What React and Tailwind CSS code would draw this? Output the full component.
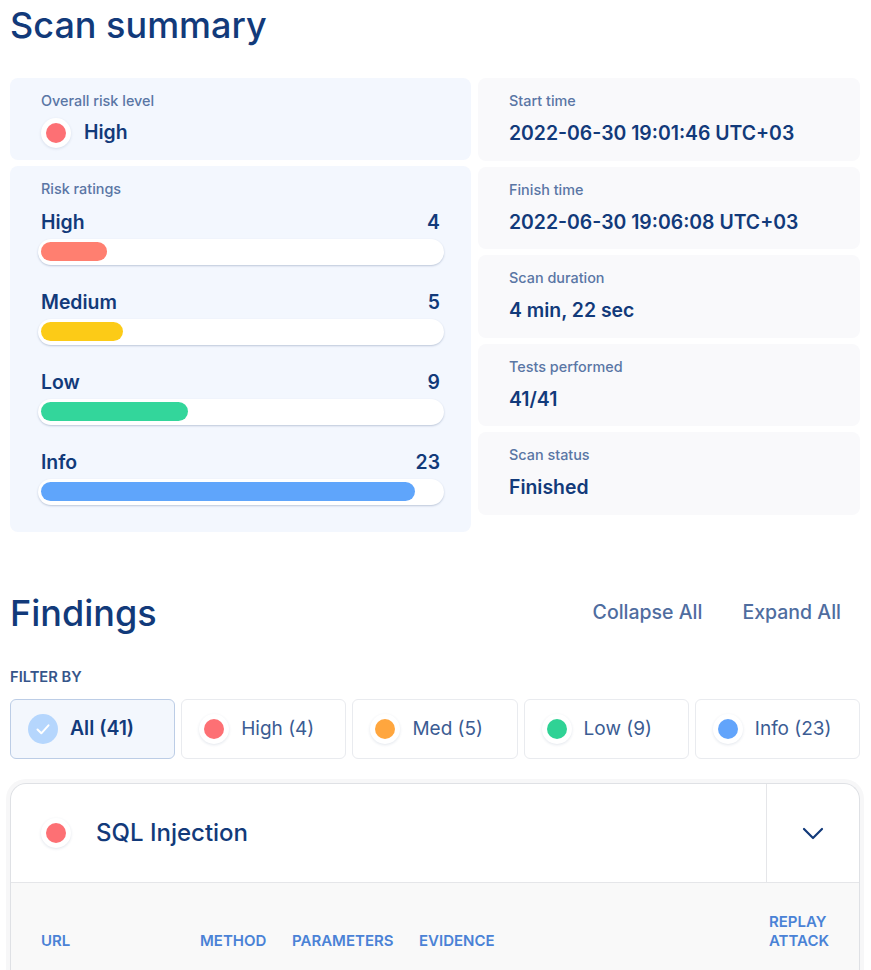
const navy = "text-[#123a7a]";
function Dot({ color, size = "w-[30px] h-[30px]" }) {
  return (
    <span className={`${size} shrink-0 rounded-full bg-white shadow-[0_1px_3px_rgba(30,60,110,0.13)] flex items-center justify-center`}>
      <span className={`w-5 h-5 rounded-full ${color}`} />
    </span>
  );
}
function Info({ label, value }) {
  return (
    <div className="h-[82.5px] bg-[#f9f9fb] rounded-lg pl-[31px] pt-[14px]">
      <div className="text-[14.4px] leading-[18px] font-medium text-[#5a76a5]">{label}</div>
      <div className={`mt-[10px] text-[19.4px] leading-[26px] font-semibold ${navy}`}>{value}</div>
    </div>
  );
}
function Rating({ name, n, bar, width }) {
  return (
    <div className="h-[80px]">
      <div className={`flex justify-between text-[19.4px] leading-[26px] font-semibold ${navy}`}>
        <span>{name}</span><span>{n}</span>
      </div>
      <div className="mt-[4px] -ml-[3px] w-[406px] h-[26px] rounded-full bg-white shadow-[0_1px_2px_rgba(30,60,110,0.25)] p-[3px] pr-0">
        <div className={`h-[19px] rounded-full ${bar} ${width}`} />
      </div>
    </div>
  );
}
function Filter({ label, color, active }) {
  return (
    <div className={`flex-1 h-[60px] rounded-md border flex items-center pl-[17px] gap-[12px] ${active ? "bg-[#f3f7fd] border-[#bccde6]" : "bg-white border-[#e9ebef]"}`}>
      {active ? (
        <span className="w-[30px] h-[30px] rounded-full bg-[#b5d6fd] flex items-center justify-center">
          <svg width="18" height="18" viewBox="0 0 18 18" fill="none" stroke="white" strokeWidth="2" strokeLinecap="round" strokeLinejoin="round"><path d="M3.5 9.5l3.8 3.8 7.2-8" /></svg>
        </span>
      ) : <Dot color={color} />}
      <span className={`${active ? `text-[19.4px] font-semibold ${navy}` : "text-[19px] text-[#3b5c93]"}`}>{label}</span>
    </div>
  );
}
export default function App() {
  return (
    <div className="h-[970px] overflow-hidden bg-white pl-[10px] pr-[11px] font-['Inter',sans-serif]">
      <h1 className={`text-[36px] leading-[50px] font-medium ${navy}`}>Scan summary</h1>
      <div className="mt-[28px] flex gap-[7px] items-start">
        <div className="w-[461px] flex flex-col gap-[6px]">
          <div className="h-[82px] bg-[#f3f7fe] rounded-lg pl-[31px] pt-[14px]">
            <div className="text-[14.4px] leading-[18px] font-medium text-[#5a76a5]">Overall risk level</div>
            <div className="mt-[8px] flex items-center gap-[13px]">
              <Dot color="bg-[#fd7074]" />
              <span className={`text-[19.4px] font-semibold ${navy}`}>High</span>
            </div>
          </div>
          <div className="h-[366px] bg-[#f3f7fe] rounded-lg pl-[31px] pr-[31px] pt-[14px]">
            <div className="text-[14.4px] leading-[18px] font-medium text-[#5a76a5]">Risk ratings</div>
            <div className="mt-[11px]">
              <Rating name="High" n="4" bar="bg-[#ff7f70]" width="w-[66px]" />
              <Rating name="Medium" n="5" bar="bg-[#fccb17]" width="w-[82px]" />
              <Rating name="Low" n="9" bar="bg-[#33d69b]" width="w-[147px]" />
              <Rating name="Info" n="23" bar="bg-[#5fa5fb]" width="w-[374px]" />
            </div>
          </div>
        </div>
        <div className="flex-1 flex flex-col gap-[6px]">
          <Info label="Start time" value="2022-06-30 19:01:46 UTC+03" />
          <Info label="Finish time" value="2022-06-30 19:06:08 UTC+03" />
          <Info label="Scan duration" value="4 min, 22 sec" />
          <Info label="Tests performed" value="41/41" />
          <Info label="Scan status" value="Finished" />
        </div>
      </div>
      <div className="mt-[56px] flex items-center justify-between pr-[19px]">
        <h2 className={`text-[36px] leading-[50px] font-medium ${navy}`}>Findings</h2>
        <div className="flex gap-[40px] text-[19.5px] font-medium text-[#4f6d9f]">
          <span>Collapse All</span><span>Expand All</span>
        </div>
      </div>
      <div className="mt-[30px] text-[14.7px] leading-[18px] font-semibold text-[#36558a]">FILTER BY</div>
      <div className="mt-[13px] flex gap-[6px]">
        <Filter label="All (41)" active />
        <Filter label="High (4)" color="bg-[#fd7074]" />
        <Filter label="Med (5)" color="bg-[#ffa63e]" />
        <Filter label="Low (9)" color="bg-[#2fd295]" />
        <Filter label="Info (23)" color="bg-[#62a4fb]" />
      </div>
      <div className="mt-[24px] rounded-t-[16px] border border-[#dfe1e5] border-b-0 shadow-[0_0_0_4px_#f7f7f8] h-[300px]">
        <div className="h-[99px] flex border-b border-[#e5e6e9]">
          <div className="flex-1 flex items-center pl-[30px] gap-[25px]">
            <Dot color="bg-[#fd7074]" />
            <span className={`text-[24px] font-medium ${navy}`}>SQL Injection</span>
          </div>
          <div className="w-[93px] border-l border-[#e5e6e9] flex items-center justify-center">
            <svg width="22" height="13" viewBox="0 0 22 13" fill="none" stroke="#123a7a" strokeWidth="2.2" strokeLinecap="round" strokeLinejoin="round"><path d="M2 2l9 9 9-9" /></svg>
          </div>
        </div>
        <div className="bg-[#f9f9f9] h-[200px] pt-[29px] flex text-[15px] leading-[19px] font-semibold text-[#4a82d6]">
          <div className="w-[189px] pl-[30px] self-start pt-[19px]">URL</div>
          <div className="w-[92px] pt-[19px]">METHOD</div>
          <div className="w-[127px] pt-[19px]">PARAMETERS</div>
          <div className="w-[350px] pt-[19px]">EVIDENCE</div>
          <div>REPLAY<br />ATTACK</div>
        </div>
      </div>
    </div>
  );
}
